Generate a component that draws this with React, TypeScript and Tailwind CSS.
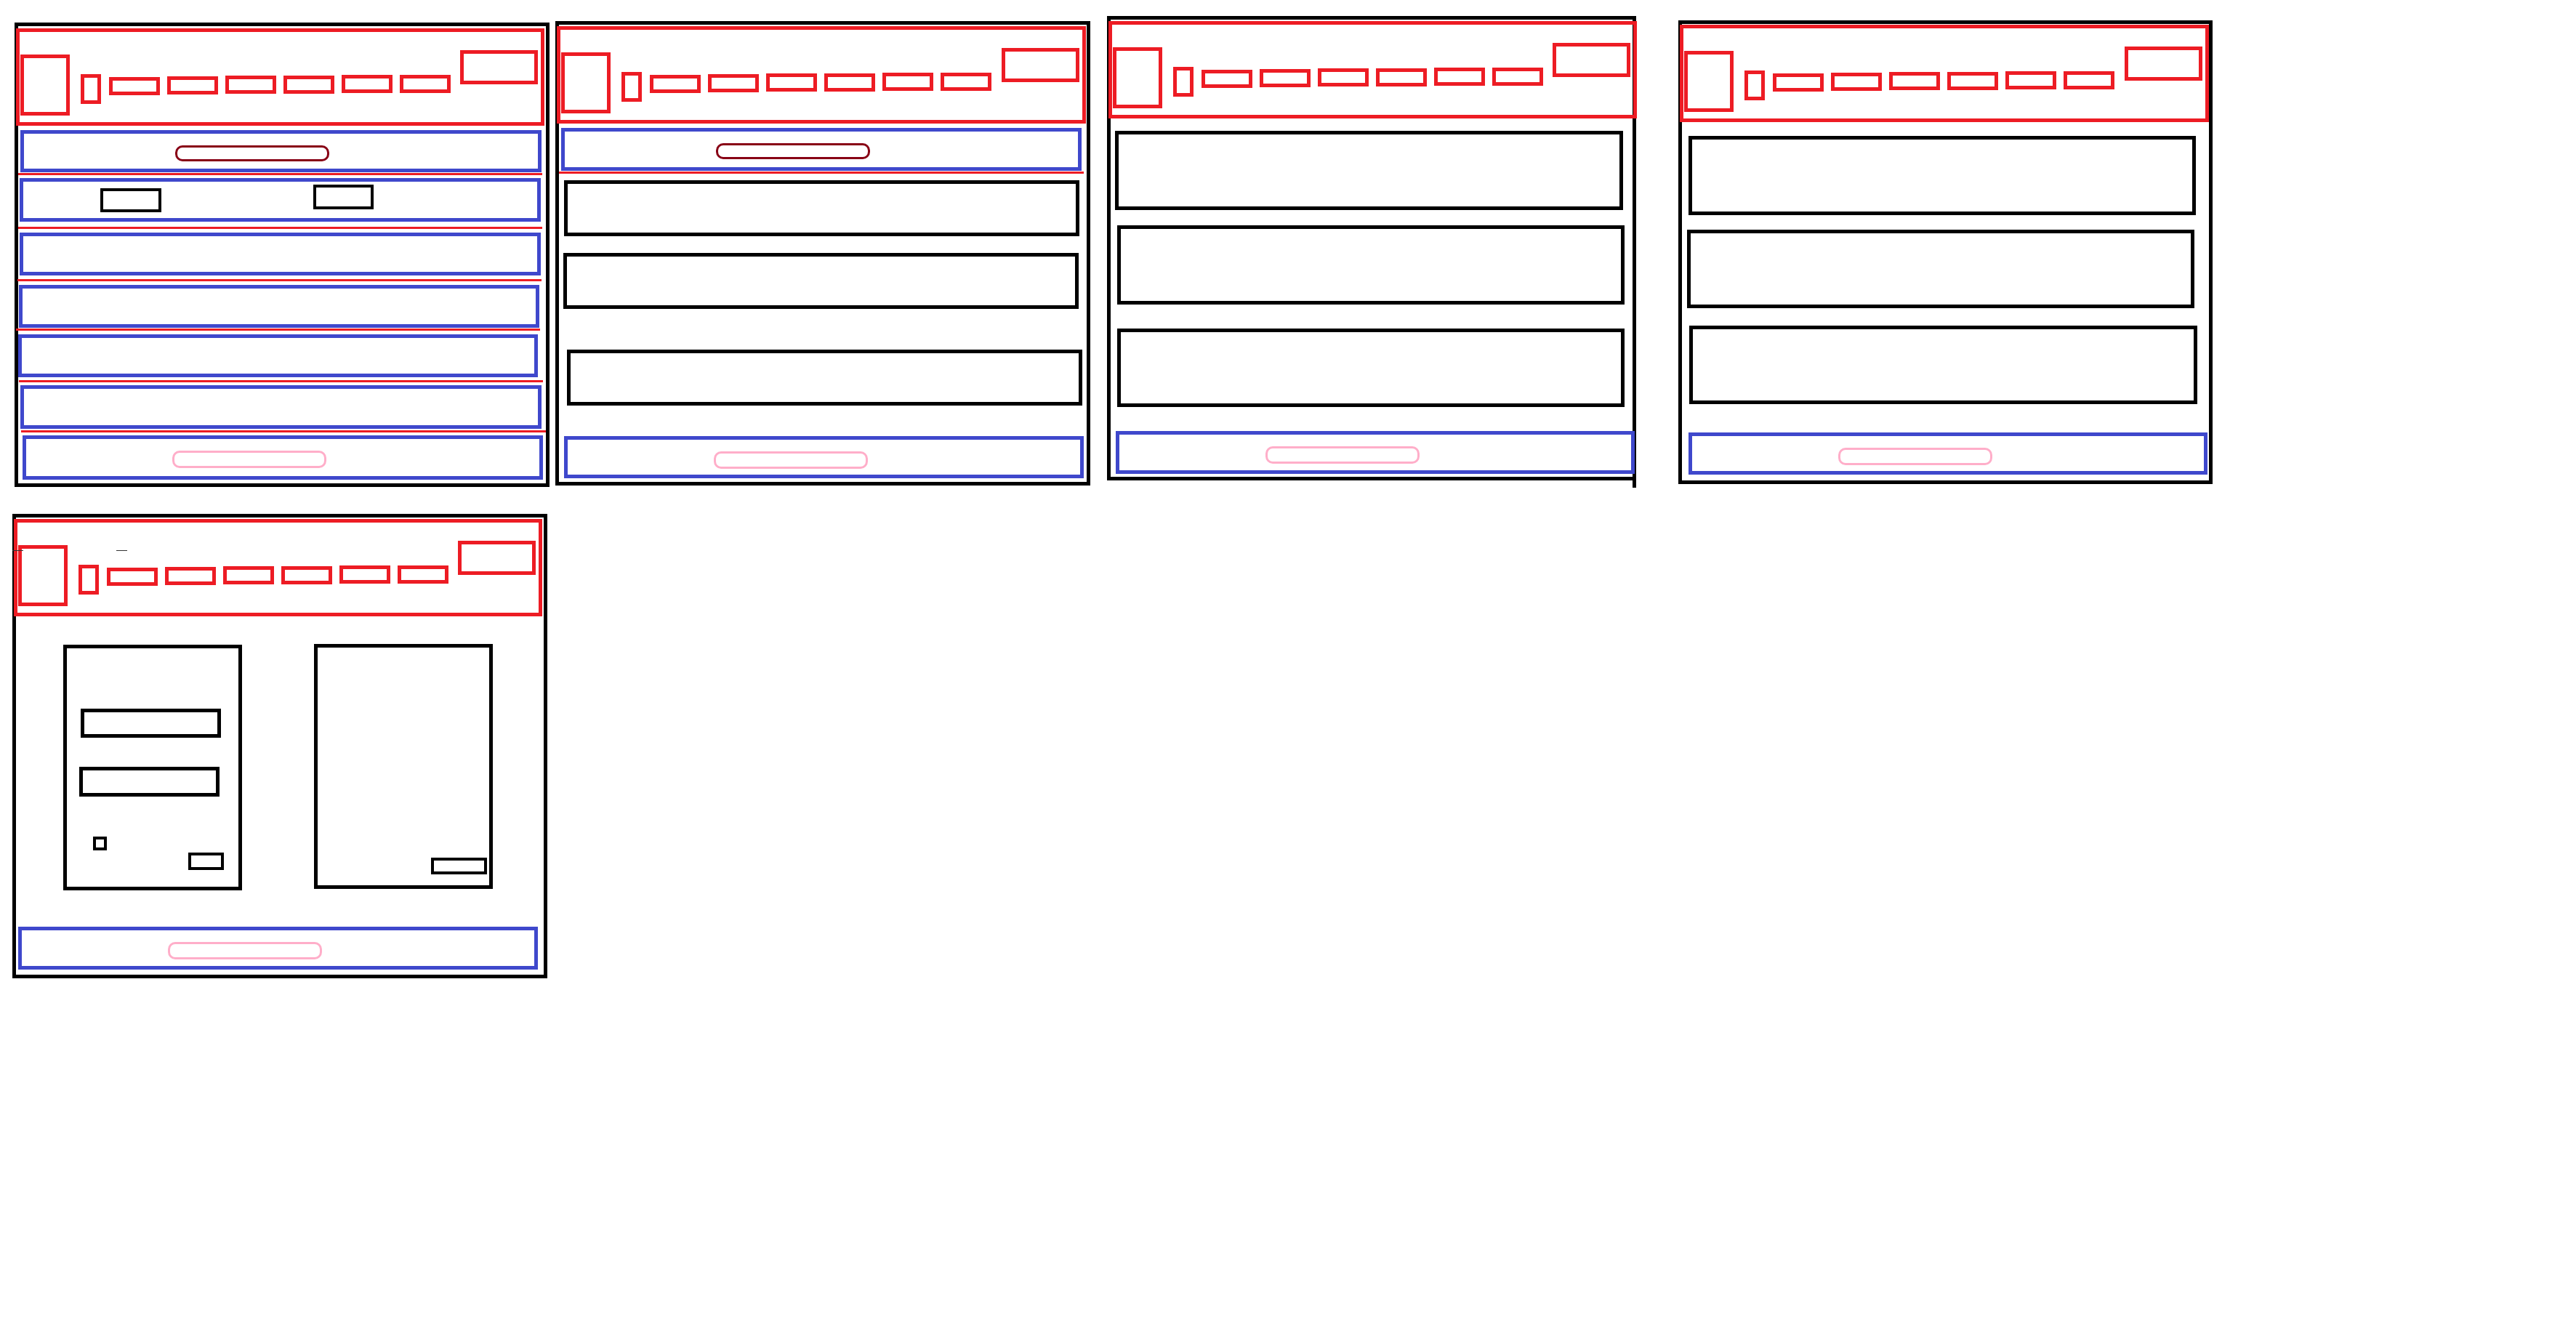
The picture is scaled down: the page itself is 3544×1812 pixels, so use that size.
const NAV_TOPS = ['mt-[62px]', 'mt-[61px]', 'mt-[60px]', 'mt-[60px]', 'mt-[59px]', 'mt-[59px]'];

// ---------------------------------------------------------------------------
// Shared wireframe pieces
// ---------------------------------------------------------------------------

function Header({ className = '' }: { className?: string }) {
  return (
    <div className={`flex h-[134px] shrink-0 items-start border-[5px] border-[#ed1c24] pl-[1px] pr-[4px] ${className}`}>
      {/* logo */}
      <div className="mt-[31px] h-[84px] w-[68px] shrink-0 border-[5px] border-[#ed1c24]" />
      {/* menu toggle */}
      <div className="ml-[15px] mt-[58px] h-[41px] w-[28px] shrink-0 border-[5px] border-[#ed1c24]" />
      {/* nav links */}
      <div className="ml-[11px] flex items-start gap-[10px]">
        {NAV_TOPS.map((top, i) => (
          <div key={i} className={`h-[25px] w-[70px] shrink-0 border-[5px] border-[#ed1c24] ${top}`} />
        ))}
      </div>
      {/* call to action */}
      <div className="ml-auto mt-[25px] h-[47px] w-[107px] shrink-0 border-[5px] border-[#ed1c24]" />
    </div>
  );
}

function BlueRow({ className = '', children }: { className?: string; children?: React.ReactNode }) {
  return <div className={`shrink-0 border-[5px] border-[#3f48cc] ${className}`}>{children}</div>;
}

function RedRule({ className = '' }: { className?: string }) {
  return <div className={`h-[3px] shrink-0 bg-[#ed1c24] ${className}`} />;
}

function Block({ className = '' }: { className?: string }) {
  return <div className={`shrink-0 border-[5px] border-black ${className}`} />;
}

function Footer({ className = '' }: { className?: string }) {
  return (
    <BlueRow className={className}>
      <div className="ml-[201px] mt-[16px] h-[24px] w-[212px] rounded-[10px] border-[3px] border-[#ffaec9]" />
    </BlueRow>
  );
}

// ---------------------------------------------------------------------------
// Panels
// ---------------------------------------------------------------------------

function PanelOne() {
  return (
    <div className="mt-[31px] flex h-[639px] w-[736px] shrink-0 flex-col border-[5px] border-black">
      <Header className="-ml-[3px] mr-[2px] mt-[3px]" />

      <BlueRow className="ml-[3px] mr-[6px] mt-[6px] h-[58px]">
        <div className="ml-[208px] mt-[16px] h-[22px] w-[212px] rounded-[10px] border-[3px] border-[#880015]" />
      </BlueRow>
      <RedRule className="mr-[5px] mt-[1px]" />

      <BlueRow className="ml-[2px] mr-[7px] mt-[4px] flex h-[60px] items-start">
        <div className="ml-[106px] mt-[9px] h-[33px] w-[84px] shrink-0 border-[4px] border-black" />
        <div className="ml-[209px] mt-[4px] h-[34px] w-[83px] shrink-0 border-[4px] border-black" />
      </BlueRow>
      <RedRule className="mr-[5px] mt-[7px]" />

      <BlueRow className="ml-[2px] mr-[7px] mt-[5px] h-[59px]" />
      <RedRule className="-ml-[1px] mr-[6px] mt-[5px]" />

      <BlueRow className="ml-[1px] mr-[9px] mt-[5px] h-[59px]" />
      <RedRule className="-ml-[3px] mr-[8px] mt-[1px]" />

      <BlueRow className="mr-[11px] mt-[5px] h-[59px]" />
      <RedRule className="ml-[1px] mr-[4px] mt-[4px]" />

      <BlueRow className="ml-[3px] mr-[6px] mt-[4px] h-[60px]" />
      <RedRule className="ml-[4px] mt-[2px]" />

      <Footer className="ml-[6px] mr-[4px] mt-[4px] h-[61px]" />
    </div>
  );
}

function PanelTwo() {
  return (
    <div className="ml-[8px] mt-[29px] flex h-[639px] w-[736px] shrink-0 flex-col border-[5px] border-black">
      <Header className="-ml-[3px] mr-[1px] mt-[2px]" />

      <BlueRow className="ml-[3px] mr-[7px] mt-[6px] h-[59px]">
        <div className="ml-[208px] mt-[16px] h-[22px] w-[212px] rounded-[10px] border-[3px] border-[#880015]" />
      </BlueRow>
      <RedRule className="mr-[4px] mt-[1px]" />

      <Block className="ml-[7px] mr-[10px] mt-[9px] h-[77px]" />
      <Block className="ml-[6px] mr-[11px] mt-[23px] h-[77px]" />
      <Block className="ml-[11px] mr-[6px] mt-[56px] h-[77px]" />

      <Footer className="ml-[7px] mr-[4px] mt-[42px] h-[58px]" />
    </div>
  );
}

function PanelThree() {
  return (
    <div className="relative ml-[23px] mt-[22px] flex h-[639px] w-[728px] shrink-0 flex-col border-[5px] border-black">
      <Header className="-ml-[3px] -mr-[6px] mt-[2px]" />

      <Block className="ml-[6px] mr-[13px] mt-[17px] h-[109px]" />
      <Block className="ml-[9px] mr-[11px] mt-[21px] h-[109px]" />
      <Block className="ml-[9px] mr-[11px] mt-[33px] h-[108px]" />

      <Footer className="ml-[7px] -mr-[3px] mt-[33px] h-[59px]" />

      {/* overshoot of the hand drawn right edge */}
      <div className="absolute -bottom-[15px] -right-[5px] h-[10px] w-[5px] bg-black" />
    </div>
  );
}

function PanelFour() {
  return (
    <div className="ml-[58px] mt-[28px] flex h-[638px] w-[735px] shrink-0 flex-col border-[5px] border-black">
      <Header className="-ml-[3px] mt-[1px]" />

      <Block className="ml-[9px] mr-[18px] mt-[19px] h-[109px]" />
      <Block className="ml-[7px] mr-[20px] mt-[20px] h-[108px]" />
      <Block className="ml-[10px] mr-[16px] mt-[24px] h-[108px]" />

      <Footer className="ml-[9px] mr-[2px] mt-[39px] h-[58px]" />
    </div>
  );
}

function PanelFive() {
  return (
    <div className="relative ml-[17px] mt-[37px] flex h-[639px] w-[736px] flex-col border-[5px] border-black">
      <Header className="-ml-[3px] mr-[2px] mt-[2px]" />

      {/* stray pencil marks */}
      <div className="absolute -left-[5px] top-[45px] h-px w-[15px] bg-[#333]" />
      <div className="absolute left-[138px] top-[45px] h-px w-[15px] bg-[#333]" />

      {/* two cards */}
      <div className="ml-[65px] mt-[38px] flex items-start">
        <div className="mt-[1px] flex h-[338px] w-[246px] shrink-0 flex-col border-[5px] border-black">
          <div className="ml-[19px] mt-[83px] h-[40px] w-[193px] border-[5px] border-black" />
          <div className="ml-[17px] mt-[40px] h-[41px] w-[193px] border-[5px] border-black" />
          <div className="ml-[36px] mt-[55px] flex items-start">
            <div className="h-[19px] w-[19px] shrink-0 border-[4px] border-black" />
            <div className="ml-[112px] mt-[22px] h-[24px] w-[49px] shrink-0 border-[4px] border-black" />
          </div>
        </div>

        <div className="ml-[99px] flex h-[337px] w-[246px] shrink-0 flex-col border-[5px] border-black">
          <div className="ml-[156px] mt-[289px] h-[23px] w-[77px] border-[4px] border-black" />
        </div>
      </div>

      <Footer className="ml-[3px] mr-[8px] mt-[50px] h-[59px]" />
    </div>
  );
}

export default function App() {
  return (
    <div className="h-[1812px] w-[3544px] bg-white">
      <div className="flex items-start pl-[20px]">
        <PanelOne />
        <PanelTwo />
        <PanelThree />
        <PanelFour />
      </div>
      <div className="flex">
        <PanelFive />
      </div>
    </div>
  );
}
